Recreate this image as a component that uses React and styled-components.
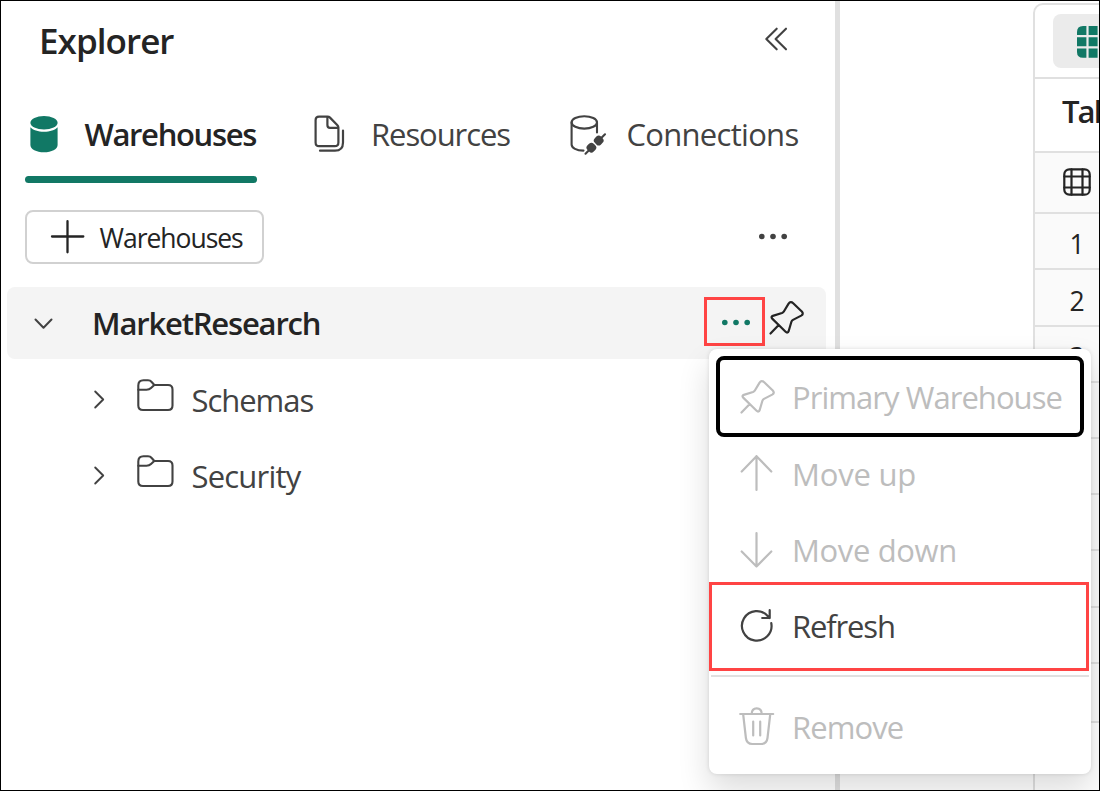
import React from "react";
import styled, { createGlobalStyle } from "styled-components";

const Global = createGlobalStyle`
  *, *::before, *::after { box-sizing: border-box; }
  body { margin: 0; background: #fff; }
`;

const Line = styled.svg`
  display: block;
  flex: none;
  overflow: visible;
  fill: none;
  stroke: currentColor;
  stroke-linecap: round;
  stroke-linejoin: round;
`;

const Solid = styled.svg`
  display: block;
  flex: none;
  overflow: visible;
  fill: currentColor;
`;

const Frame = styled.div`
  position: relative;
  display: flex;
  width: 1100px;
  height: 791px;
  border: 1px solid #000;
  overflow: hidden;
  background: #fff;
  color: #424242;
  font-family: "Open Sans", "Noto Sans", sans-serif;
  font-size: 31px;
  line-height: 40px;
  white-space: nowrap;
`;

const Label = styled.span`
  letter-spacing: ${(p) => p.$track || 0}px;
`;

const Explorer = styled.section`
  width: 834px;
  flex: none;
`;

const Header = styled.header`
  display: flex;
  align-items: center;
  justify-content: space-between;
  height: 76px;
  padding: 0 46px 0 38px;
`;

const Title = styled.h1`
  margin: 0;
  padding-top: 4px;
  font-size: 35px;
  font-weight: 600;
  letter-spacing: -0.95px;
  color: #242424;
`;

const Tabs = styled.nav`
  display: flex;
  gap: 57px;
  height: 92px;
  margin-top: 14px;
  padding-left: 24px;
`;

const Tab = styled.div`
  display: flex;
  flex-direction: column;
  width: ${(p) => p.$width}px;
  color: ${(p) => (p.$active ? "#242424" : "#424242")};
  font-weight: ${(p) => (p.$active ? 600 : 400)};
  &::after {
    content: "";
    height: 7px;
    border-radius: 4px;
    background: ${(p) => (p.$active ? "#117865" : "transparent")};
  }
`;

const TabBody = styled.div`
  display: flex;
  align-items: center;
  gap: ${(p) => p.$gap}px;
  height: 85px;
  padding-left: ${(p) => p.$inset || 0}px;
`;

const Toolbar = styled.div`
  display: flex;
  align-items: center;
  justify-content: space-between;
  margin-top: 27px;
  padding: 0 48.5px 0 24px;
  height: 54px;
`;

const AddButton = styled.button`
  display: flex;
  align-items: center;
  gap: 15px;
  width: 239px;
  height: 54px;
  padding: 0 0 0 23.5px;
  border: 2px solid #d1d1d1;
  border-radius: 8px;
  background: #fff;
  color: #242424;
  font: inherit;
  font-size: 26.5px;
`;

const AddLabel = styled(Label)`
  padding-top: 2px;
`;

const Tree = styled.div`
  margin-top: 23px;
`;

const RootRow = styled.div`
  display: flex;
  align-items: center;
  width: 819px;
  height: 72px;
  margin: 0 0 3px 6px;
  padding: 0 21px 0 27px;
  border-radius: 8px;
  background: #f4f4f4;
  color: #242424;
  font-weight: 600;
`;

const ChevronSlot = styled.span`
  padding-top: 2px;
  color: #424242;
`;

const RootName = styled(Label)`
  flex: 1;
  margin-left: 39px;
`;

const Actions = styled.div`
  display: flex;
  align-items: center;
  gap: 4px;
  height: 49px;
  margin-top: -3px;
`;

const MoreBox = styled.span`
  display: flex;
  align-items: center;
  justify-content: center;
  width: 61px;
  height: 49px;
  padding: 2px 0 0 3px;
  border: 3px solid #ff4444;
  color: #117865;
`;

const PinSlot = styled.span`
  height: 44px;
`;

const ChildRow = styled.div`
  display: flex;
  align-items: center;
  height: 76px;
  padding-left: 92px;
`;

const FolderSlot = styled.span`
  margin: -10px 17.5px 0 30px;
`;

const Divider = styled.div`
  width: 5px;
  flex: none;
  background: #e0e0e0;
`;

const Canvas = styled.div`
  width: 193px;
  flex: none;
`;

const TablePanel = styled.section`
  width: 160px;
  height: 800px;
  flex: none;
  margin-top: 2px;
  border: 2px solid #e0e0e0;
  border-radius: 10px 0 0 0;
  color: #242424;
`;

const ViewBar = styled.div`
  height: 74px;
  padding: 9px 0 0 18px;
  border-bottom: 2px solid #e0e0e0;
`;

const ViewButton = styled.div`
  width: 120px;
  height: 54px;
  padding: 12px 0 0 24px;
  border-radius: 8px;
  background: #ebebeb;
  color: #117865;
`;

const TableTitle = styled.div`
  height: 74px;
  padding: 12px 0 0 27px;
  border-bottom: 2px solid #e0e0e0;
  font-weight: 600;
  letter-spacing: -1.9px;
`;

const NumberCell = styled.div`
  display: flex;
  align-items: center;
  height: ${(p) => p.$height}px;
  padding: ${(p) => p.$top || 0}px 0 0 ${(p) => p.$inset || 0}px;
  border-bottom: 2px solid #e0e0e0;
  background: #fafafa;
  font-size: 26.5px;
`;

const GridSlot = styled.span`
  margin-top: -1px;
`;

const Digit = styled.span`
  width: 84px;
  text-align: center;
`;

const Menu = styled.div`
  position: absolute;
  left: 708px;
  top: 348px;
  display: flex;
  flex-direction: column;
  width: 382px;
  height: 425px;
  padding: 7px 0 0;
  border-radius: 8px;
  background: #fff;
  box-shadow: 0 0 4px rgba(0, 0, 0, 0.12), 0 16px 32px rgba(0, 0, 0, 0.14);
`;

const MenuItem = styled.div`
  display: flex;
  flex: none;
  align-items: center;
  gap: 17.5px;
  height: ${(p) => p.$height || 76}px;
  margin-left: 7px;
  padding-left: 22.5px;
  color: ${(p) => (p.$disabled ? "#bdbdbd" : "#424242")};
`;

const FocusedItem = styled(MenuItem)`
  width: 368px;
  gap: 16.5px;
  padding-left: 19.5px;
  border: 4px solid #000;
  border-radius: 8px;
`;

const MarkedItem = styled(MenuItem)`
  width: 380px;
  margin: -8px 0 0;
  padding: 0 0 2px 26.5px;
  border: 3px solid #ff4444;
`;

const Separator = styled.div`
  flex: none;
  width: 378px;
  height: 2px;
  margin: 4px 0 0 2px;
  background: #e0e0e0;
`;

const CollapseIcon = () => (
  <Line width="24" height="24" strokeWidth="2.1">
    <path d="M11.7 1.7 1.3 12l10.4 10.3M21 1.7 10.6 12 21 22.3" />
  </Line>
);

const TabDatabase = styled(Solid)`
  color: #117865;
`;

const DatabaseIcon = () => (
  <TabDatabase width="28" height="38">
    <ellipse cx="14" cy="7.7" rx="13.6" ry="6.8" />
    <path d="M.4 12.2C3 15 8 16.7 14 16.7S25 15 27.6 12.2V30c0 4.200-6 7.300-13.600 7.300S.4 34.200.4 30Z" />
  </TabDatabase>
);

const DocsIcon = () => (
  <Line width="30" height="37" strokeWidth="2.2">
    <path d="M5 1.600H13.500Q15 1.600 16 2.600L23.200 10Q24.400 11.200 24.400 12.600V27.500Q24.400 31.200 20.800 31.200H5Q1.600 31.200 1.600 27.500V5Q1.600 1.600 5 1.600Z" />
    <path d="M13.400 2V10Q13.400 12.800 16 12.800H24" />
    <path d="M29 15.500V27.500Q29 35.700 21 35.700H6" />
  </Line>
);

const DatabasePlugIcon = () => (
  <Line width="36" height="40" strokeWidth="2.1">
    <ellipse cx="14.300" cy="8.400" rx="12.700" ry="6.200" />
    <path d="M1.600 8.400V30.500C1.600 34 6.500 36.500 13.500 36.600M27 8.400V18.500" />
    <path d="M35 20.300 31 24.300M15.500 39.700 19 36.200" />
    <g fill="currentColor" stroke="none">
      <rect x="24.300" y="22.100" width="8.800" height="8.800" rx="3.300" transform="rotate(45 28.700 26.500)" />
      <rect x="17" y="29.300" width="8.800" height="8.800" rx="3.300" transform="rotate(45 21.400 33.700)" />
    </g>
  </Line>
);

const PlusIcon = () => (
  <Line width="34" height="34" strokeWidth="2.300">
    <path d="M16.500 1.200V32.300M1 16.500H32.300" />
  </Line>
);

const DotsIcon = () => (
  <Solid width="28" height="6">
    <circle cx="2.800" cy="2.500" r="2.800" />
    <circle cx="14" cy="2.500" r="2.800" />
    <circle cx="25.200" cy="2.500" r="2.800" />
  </Solid>
);

const ChevronDown = () => (
  <Line width="19" height="12" strokeWidth="2">
    <path d="M1.500 1.500 9.500 9.700l8-8.200" />
  </Line>
);

const ChevronRight = () => (
  <Line width="13" height="20" strokeWidth="1.900">
    <path d="M2.200 1.500 10.200 9.500 2.200 17.500" />
  </Line>
);

const FolderIcon = () => (
  <Line width="38" height="34" strokeWidth="2.100">
    <path d="M2.300 7.500Q2.300 2.200 7.500 2.200H12Q14.300 2.200 15.700 4L18.300 7H32Q36.500 7 36.500 11.500V27.500Q36.500 32 32 32H7Q2.300 32 2.300 27.500Z" />
    <path d="M2.300 11.800H10.500Q13.300 11.800 15 10L18.300 7" />
  </Line>
);

const PinIcon = () => (
  <Line width="36" height="36" strokeWidth="2.200">
    <path d="M24.200 3.200 32.800 11.500Q35 14 32.200 15.600L24 19.900Q22.800 20.600 22.400 21.800L19.700 31Q18.600 33.700 16.600 31.800L3.200 18.600Q1.600 16.600 3.800 15.900L13 13Q14.400 12.400 15 11.200L19.600 3.600Q21.600.8 24.200 3.200ZM9.700 25 1.500 33.500" />
  </Line>
);

const ArrowUp = () => (
  <Line width="36" height="38" strokeWidth="2.200">
    <path d="M17.500 35V1.200M2.700 16.500 17.500 1.200 32.300 16.500" />
  </Line>
);

const ArrowDown = () => (
  <Line width="36" height="38" strokeWidth="2.200">
    <path d="M17.500 2V35.500M2.700 20.500 17.500 35.500 32.300 20.500" />
  </Line>
);

const RefreshIcon = () => (
  <Line width="36" height="36" strokeWidth="2.200">
    <path d="M32.300 15.200A14.800 14.800 0 1 1 29.200 8.500L30.700 10M30.700 2.200V10H23.200" />
  </Line>
);

const TrashIcon = () => (
  <Line width="36" height="40" strokeWidth="2.200">
    <path d="M1.200 7H34.200M12.700 7Q12.700 1.300 17.700 1.300T22.700 7M4.200 7.500 6.900 31Q7.700 37 13.200 37H22.200Q27.700 37 28.500 31L31.200 7.500M14.200 14.500V28.500M21.200 14.500V28.500" />
  </Line>
);

const GridFilledIcon = () => (
  <Solid width="32" height="32">
    <path d="M6 0H9.400V9H0V6Q0 0 6 0ZM11.600 0H20.600V9H11.600ZM0 11.200H9.400V20.200H0ZM11.600 11.200H20.600V20.200H11.600ZM0 22.500H9.400V31.800H6Q0 31.800 0 26ZM11.600 22.500H20.600V31.800H11.600ZM22.800 0H32V31.800H22.800Z" />
  </Solid>
);

const GridIcon = () => (
  <Line width="28" height="28" strokeWidth="2.200">
    <rect x="1.300" y="1.300" width="25.400" height="25.400" rx="5" />
    <path d="M8.500 1.300V26.700M19.500 1.300V26.700M1.300 8.500H26.700M1.300 19.500H26.700" />
  </Line>
);

const rows = [56, 57, 56, 56, 56, 56, 57, 56, 59];

export default function App() {
  return (
    <>
      <Global />
      <Frame>
        <Explorer>
          <Header>
            <Title>Explorer</Title>
            <CollapseIcon />
          </Header>
          <Tabs>
            <Tab $active $width={232}>
              <TabBody $gap={27} $inset={4.5}>
                <DatabaseIcon />
                <Label $track={-1.35}>Warehouses</Label>
              </TabBody>
            </Tab>
            <Tab $width={199}>
              <TabBody $gap={27}>
                <DocsIcon />
                <Label $track={-1.08}>Resources</Label>
              </TabBody>
            </Tab>
            <Tab $width={230}>
              <TabBody $gap={20.5}>
                <DatabasePlugIcon />
                <Label $track={-0.71}>Connections</Label>
              </TabBody>
            </Tab>
          </Tabs>
          <Toolbar>
            <AddButton>
              <PlusIcon />
              <AddLabel $track={-1.03}>Warehouses</AddLabel>
            </AddButton>
            <DotsIcon />
          </Toolbar>
          <Tree>
            <RootRow>
              <ChevronSlot>
                <ChevronDown />
              </ChevronSlot>
              <RootName $track={-1.18}>MarketResearch</RootName>
              <Actions>
                <MoreBox>
                  <DotsIcon />
                </MoreBox>
                <PinSlot>
                  <PinIcon />
                </PinSlot>
              </Actions>
            </RootRow>
            <ChildRow>
              <ChevronRight />
              <FolderSlot>
                <FolderIcon />
              </FolderSlot>
              <Label $track={-1.05}>Schemas</Label>
            </ChildRow>
            <ChildRow>
              <ChevronRight />
              <FolderSlot>
                <FolderIcon />
              </FolderSlot>
              <Label $track={-0.8}>Security</Label>
            </ChildRow>
          </Tree>
        </Explorer>
        <Divider />
        <Canvas />
        <TablePanel>
          <ViewBar>
            <ViewButton>
              <GridFilledIcon />
            </ViewButton>
          </ViewBar>
          <TableTitle>Table</TableTitle>
          <NumberCell $height={61} $inset={28}>
            <GridSlot>
              <GridIcon />
            </GridSlot>
          </NumberCell>
          {rows.map((height, i) => (
            <NumberCell key={i} $height={height} $top={6}>
              <Digit>{i + 1}</Digit>
            </NumberCell>
          ))}
        </TablePanel>
        <Menu>
          <FocusedItem $disabled $height={81}>
            <PinIcon />
            <Label $track={-0.95}>Primary Warehouse</Label>
          </FocusedItem>
          <MenuItem $disabled $height={73}>
            <ArrowUp />
            <Label $track={-0.2}>Move up</Label>
          </MenuItem>
          <MenuItem $disabled $height={80}>
            <ArrowDown />
            <Label $track={-0.36}>Move down</Label>
          </MenuItem>
          <MarkedItem $height={89}>
            <RefreshIcon />
            <Label $track={-1.15}>Refresh</Label>
          </MarkedItem>
          <Separator />
          <MenuItem $disabled $height={99}>
            <TrashIcon />
            <Label $track={-0.9}>Remove</Label>
          </MenuItem>
        </Menu>
      </Frame>
    </>
  );
}
